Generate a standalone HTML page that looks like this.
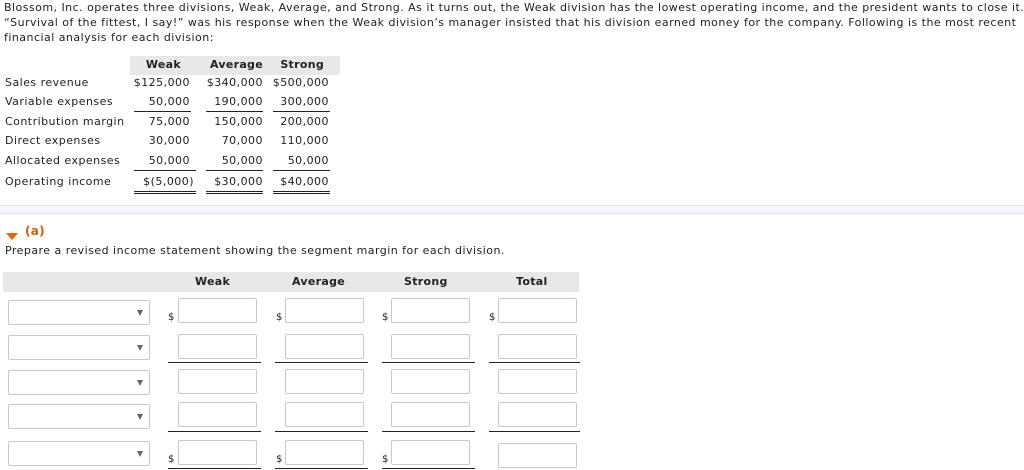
<!DOCTYPE html>
<html><head><style>
body{margin:0;width:1024px;height:470px;background:#fff;font-family:"DejaVu Sans","Liberation Sans",sans-serif;font-size:11px;letter-spacing:0.47px;color:#222;position:relative;overflow:hidden}
.a{position:absolute;white-space:nowrap}
.r{position:absolute;text-align:right;white-space:nowrap}
.b{font-weight:bold;letter-spacing:0.3px}
.ul{position:absolute;height:1px;background:#222}
.inp{position:absolute;width:79px;height:25px;border:1px solid #c8c8c8;border-radius:2px;box-sizing:border-box;background:#fff}
.sel{position:absolute;left:8px;width:142px;height:25px;border:1px solid #c8c8c8;border-radius:2px;box-sizing:border-box;background:#fff}
.sel:after{content:"";position:absolute;right:6px;top:9px;border-left:3px solid transparent;border-right:3px solid transparent;border-top:6px solid #666}
.d{position:absolute;font-size:10px}
</style></head><body>
<div class="a" style="left:4px;top:0px;line-height:15px">Blossom, Inc. operates three divisions, Weak, Average, and Strong. As it turns out, the Weak division has the lowest operating income, and the president wants to close it.<br>“Survival of the fittest, I say!” was his response when the Weak division’s manager insisted that his division earned money for the company. Following is the most recent<br>financial analysis for each division:</div>

<div style="position:absolute;left:130px;top:56px;width:210px;height:19px;background:#e8e8e8"></div>
<div class="r b" style="right:843px;top:58px">Weak</div>
<div class="r b" style="right:761px;top:58px">Average</div>
<div class="r b" style="right:700px;top:58px">Strong</div>

<div class="a" style="left:5px;top:76px">Sales revenue</div>
<div class="a" style="left:5px;top:95px">Variable expenses</div>
<div class="a" style="left:5px;top:115px">Contribution margin</div>
<div class="a" style="left:5px;top:134px">Direct expenses</div>
<div class="a" style="left:5px;top:154px">Allocated expenses</div>
<div class="a" style="left:5px;top:175px">Operating income</div>

<div class="r" style="right:834px;top:76px">$125,000</div><div class="r" style="right:761px;top:76px">$340,000</div><div class="r" style="right:695px;top:76px">$500,000</div>
<div class="r" style="right:834px;top:95px">50,000</div><div class="r" style="right:761px;top:95px">190,000</div><div class="r" style="right:695px;top:95px">300,000</div>
<div class="r" style="right:834px;top:115px">75,000</div><div class="r" style="right:761px;top:115px">150,000</div><div class="r" style="right:695px;top:115px">200,000</div>
<div class="r" style="right:834px;top:134px">30,000</div><div class="r" style="right:761px;top:134px">70,000</div><div class="r" style="right:695px;top:134px">110,000</div>
<div class="r" style="right:834px;top:154px">50,000</div><div class="r" style="right:761px;top:154px">50,000</div><div class="r" style="right:695px;top:154px">50,000</div>
<div class="r" style="right:830px;top:175px">$(5,000)</div><div class="r" style="right:761px;top:175px">$30,000</div><div class="r" style="right:695px;top:175px">$40,000</div>

<div class="ul" style="left:134px;top:111px;width:57px"></div><div class="ul" style="left:206px;top:111px;width:57px"></div><div class="ul" style="left:273px;top:111px;width:57px"></div>
<div class="ul" style="left:134px;top:170px;width:62px"></div><div class="ul" style="left:206px;top:170px;width:57px"></div><div class="ul" style="left:273px;top:170px;width:57px"></div>
<div class="ul" style="left:134px;top:191px;width:62px"></div><div class="ul" style="left:206px;top:191px;width:57px"></div><div class="ul" style="left:273px;top:191px;width:57px"></div>
<div class="ul" style="left:134px;top:193px;width:62px"></div><div class="ul" style="left:206px;top:193px;width:57px"></div><div class="ul" style="left:273px;top:193px;width:57px"></div>

<div style="position:absolute;left:0;top:205px;width:1024px;height:7px;background:#f4f7fb;border-top:1px solid #dde3ec;border-bottom:1px solid #dde3ec"></div>

<div style="position:absolute;left:6px;top:233px;border-left:6px solid transparent;border-right:6px solid transparent;border-top:7px solid #e8630a"></div>
<div class="a b" style="left:25px;top:224px;color:#d9580a;font-size:12px">(a)</div>
<div class="a" style="left:5px;top:244px">Prepare a revised income statement showing the segment margin for each division.</div>

<div style="position:absolute;left:3px;top:272px;width:576px;height:20px;background:#e8e8e8"></div>
<div class="a b" style="left:195px;top:275px">Weak</div>
<div class="a b" style="left:292px;top:275px">Average</div>
<div class="a b" style="left:404px;top:275px">Strong</div>
<div class="a b" style="left:516px;top:275px">Total</div>

<div class="sel" style="top:300px"></div>
<div class="sel" style="top:335px"></div>
<div class="sel" style="top:370px"></div>
<div class="sel" style="top:404px"></div>
<div class="sel" style="top:441px"></div>

<div class="inp" style="left:178px;top:298px"></div><div class="inp" style="left:285px;top:298px"></div><div class="inp" style="left:391px;top:298px"></div><div class="inp" style="left:498px;top:298px"></div>
<div class="inp" style="left:178px;top:334px"></div><div class="inp" style="left:285px;top:334px"></div><div class="inp" style="left:391px;top:334px"></div><div class="inp" style="left:498px;top:334px"></div>
<div class="inp" style="left:178px;top:369px"></div><div class="inp" style="left:285px;top:369px"></div><div class="inp" style="left:391px;top:369px"></div><div class="inp" style="left:498px;top:369px"></div>
<div class="inp" style="left:178px;top:402px"></div><div class="inp" style="left:285px;top:402px"></div><div class="inp" style="left:391px;top:402px"></div><div class="inp" style="left:498px;top:402px"></div>
<div class="inp" style="left:178px;top:440px"></div><div class="inp" style="left:285px;top:440px"></div><div class="inp" style="left:391px;top:440px"></div><div class="inp" style="left:498px;top:443px"></div>

<div class="d" style="left:168px;top:312px">$</div><div class="d" style="left:276px;top:312px">$</div><div class="d" style="left:382px;top:312px">$</div><div class="d" style="left:489px;top:312px">$</div>
<div class="d" style="left:168px;top:454px">$</div><div class="d" style="left:276px;top:454px">$</div><div class="d" style="left:382px;top:454px">$</div>

<div class="ul" style="left:168px;top:362px;width:93px"></div><div class="ul" style="left:275px;top:362px;width:93px"></div><div class="ul" style="left:382px;top:362px;width:93px"></div><div class="ul" style="left:489px;top:362px;width:91px"></div>
<div class="ul" style="left:168px;top:431px;width:93px"></div><div class="ul" style="left:275px;top:431px;width:93px"></div><div class="ul" style="left:382px;top:431px;width:93px"></div><div class="ul" style="left:489px;top:431px;width:91px"></div>
<div class="ul" style="left:168px;top:468px;width:93px"></div><div class="ul" style="left:275px;top:468px;width:93px"></div><div class="ul" style="left:382px;top:468px;width:93px"></div>
</body></html>
